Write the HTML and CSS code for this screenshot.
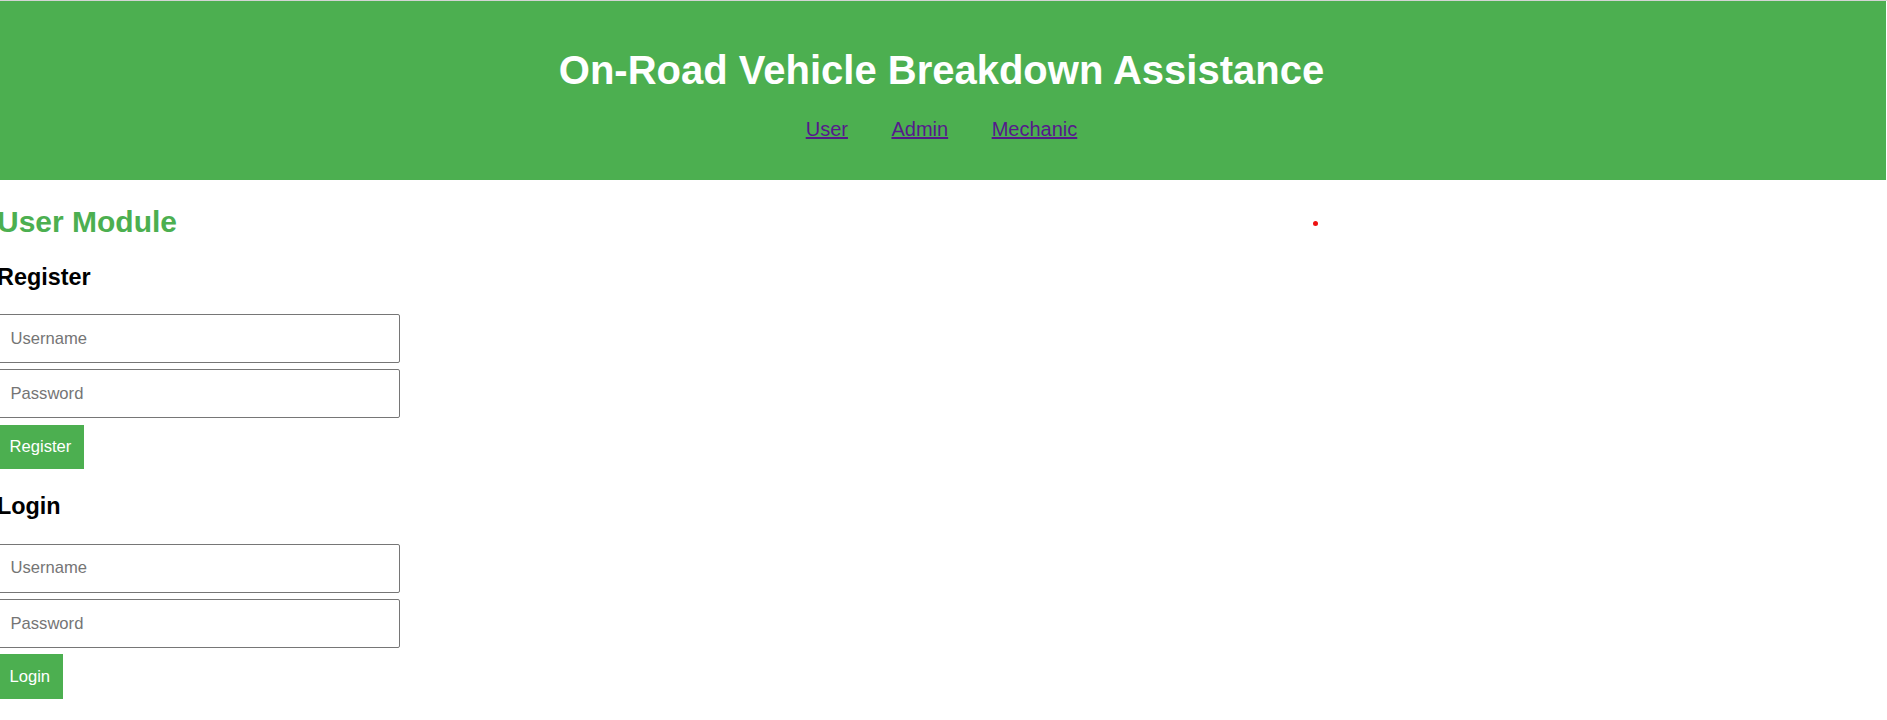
FILE: index.html
```html
<!DOCTYPE html>
<html lang="en">
<head>
<meta charset="utf-8">
<title>On-Road Vehicle Breakdown Assistance</title>
<link rel="stylesheet" href="styles.css">
</head>
<body>
<header class="site-header">
  <h1 class="site-title">On-Road Vehicle Breakdown Assistance</h1>
  <nav class="site-nav">
    <a href="#user" class="nav-link">User</a>
    <a href="#admin" class="nav-link">Admin</a>
    <a href="#mechanic" class="nav-link">Mechanic</a>
  </nav>
</header>
<main class="module">
  <h2 class="module-title">User Module</h2>
  <section class="block">
    <h3 class="block-title">Register</h3>
    <form class="form">
      <input class="field" type="text" placeholder="Username">
      <input class="field" type="password" placeholder="Password">
      <button class="btn" type="button">Register</button>
    </form>
  </section>
  <section class="block block-login">
    <h3 class="block-title">Login</h3>
    <form class="form">
      <input class="field" type="text" placeholder="Username">
      <input class="field" type="password" placeholder="Password">
      <button class="btn" type="button">Login</button>
    </form>
  </section>
</main>
<span class="dot"></span>
</body>
</html>
```
FILE: styles.css
```css
html, body {
  margin: 0;
  padding: 0;
  background: #ffffff;
}
body {
  font-family: "Liberation Sans", Arial, sans-serif;
  color: #000;
  border-top: 1px solid #d4d4d4;
  position: relative;
}
.site-header {
  background: #4CAF50;
  margin: 0 1px 0 -3px;
  height: 179px;
  box-sizing: border-box;
  padding-top: 45.5px;
  text-align: center;
}
.site-title {
  margin: 0;
  font-size: 40px;
  line-height: 46px;
  font-weight: bold;
  color: #ffffff;
}
.site-nav {
  margin-top: 25px;
  display: flex;
  justify-content: center;
  gap: 43.5px;
  font-size: 20px;
  line-height: 23px;
}
.nav-link {
  color: #551A8B;
  text-decoration: underline;
}
.module {
  margin-left: -3px;
}
.module-title {
  margin: 25px 0 24.5px;
  font-size: 30px;
  line-height: 34px;
  font-weight: bold;
  color: #4CAF50;
}
.block-title {
  margin: 0 0 23.5px;
  font-size: 23.4px;
  line-height: 27px;
  font-weight: bold;
}
.block-login {
  margin-top: 23.6px;
}
.block-login .block-title {
  margin-bottom: 24.3px;
}
.form {
  margin: 0;
  display: flex;
  flex-direction: column;
  align-items: flex-start;
  gap: 6.25px;
}
.field {
  box-sizing: border-box;
  width: 403px;
  height: 49px;
  margin: 0;
  padding: 0 12px 0 12.5px;
  border: 1px solid #767676;
  border-radius: 2px;
  font-family: "Liberation Sans", Arial, sans-serif;
  font-size: 16.6px;
  background: #fff;
}
.field::placeholder {
  color: #757575;
}
.btn {
  margin: 0;
  border: none;
  background: #4CAF50;
  color: #ffffff;
  font-family: "Liberation Sans", Arial, sans-serif;
  font-size: 16.6px;
  line-height: 19.5px;
  padding: 12.5px 12.5px;
}
.dot {
  position: absolute;
  left: 1312.5px;
  top: 220px;
  width: 5px;
  height: 5px;
  border-radius: 50%;
  background: #ee1111;
}
```
